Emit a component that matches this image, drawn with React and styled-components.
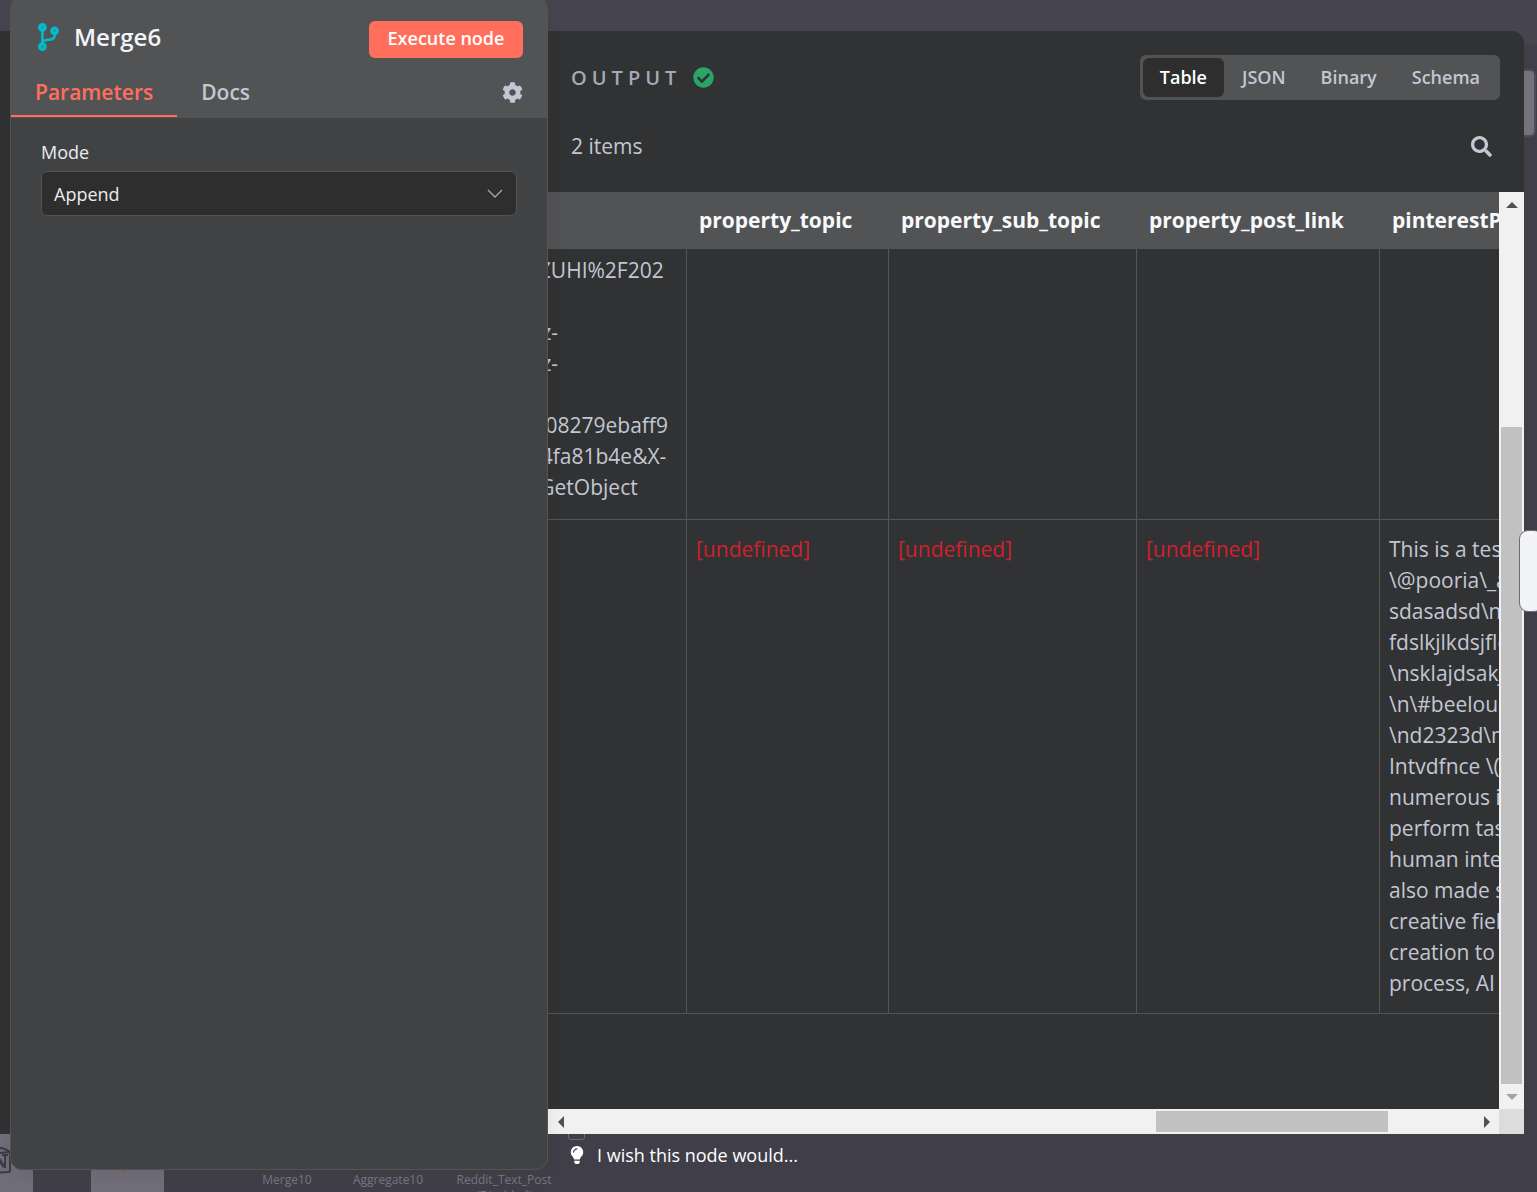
import React from "react";
import styled, { createGlobalStyle, css } from "styled-components";
import { FaCog, FaSearch, FaCheckCircle, FaLightbulb, FaCodeBranch } from "react-icons/fa";

const GlobalStyle = createGlobalStyle`
  *, *::before, *::after { box-sizing: border-box; }
  body {
    margin: 0;
    font-family: "Open Sans", "Noto Sans", sans-serif;
    color: #c3c7d3;
    background: #3f3e48;
  }
  button, select { font-family: inherit; }
`;

const Screen = styled.div`
  position: relative;
  display: grid;
  grid-template-columns: 10px 538px minmax(0, 1fr) 13px;
  grid-template-rows: 31px minmax(0, 1fr) 36px 22px;
  height: 100vh;
  overflow: hidden;
  background: linear-gradient(#46454f 0, #46454f 44px, #403f49 45px, #403f49 100%);
`;

/* Workflow canvas behind the dialog */
const Canvas = styled.div`
  position: absolute;
  inset: 0;
  overflow: hidden;
`;

const CanvasNode = styled.div`
  position: absolute;
  left: ${(p) => p.$x}px;
  bottom: -20px;
  width: ${(p) => p.$w}px;
  height: 84px;
  background: #706e7a;
`;

const CanvasDot = styled.div`
  position: absolute;
  left: 122px;
  bottom: 20px;
  width: 5px;
  height: 5px;
  border-radius: 50%;
  background: #7d6155;
`;

const NodeLabel = styled.div`
  position: absolute;
  left: ${(p) => p.$x}px;
  bottom: ${(p) => (p.$lines === 2 ? -12 : 4)}px;
  width: 120px;
  font-size: 12px;
  font-weight: 500;
  line-height: 16px;
  text-align: center;
  color: #787782;
`;

const CanvasHandle = styled.div`
  position: absolute;
  left: 568px;
  bottom: 52px;
  width: 17px;
  height: 17px;
  border: 1px solid #6a6974;
  border-radius: 3px;
`;

const CanvasButton = styled.div`
  position: absolute;
  top: 69px;
  right: 1px;
  width: 36px;
  height: 68px;
  border: 2px solid #4d4c58;
  border-radius: 6px;
  background: #74727d;
`;

const NotionMark = styled.svg`
  position: absolute;
  left: -16px;
  bottom: 18px;
  width: 28px;
  height: 28px;
`;

/* Node parameters */
const ParamsPanel = styled.section`
  grid-column: 2;
  grid-row: 1 / 4;
  z-index: 2;
  display: flex;
  flex-direction: column;
  margin-top: -4px;
  overflow: hidden;
  border: 1px solid #535456;
  border-radius: 12px;
  background: #414243;
  box-shadow: 0 6px 16px rgba(68, 28, 23, 0.08);
`;

const ParamsHeader = styled.header`
  display: flex;
  flex-direction: column;
  gap: 9px;
  padding: 24px 24px 1px 0;
  background: #525355;
`;

const TitleRow = styled.div`
  display: flex;
  align-items: flex-start;
  height: 37px;
  padding-left: 27px;
`;

const BranchIcon = styled(FaCodeBranch)`
  width: 21px;
  height: 32px;
  color: #00bbcc;
`;

const Title = styled.h1`
  flex: 1;
  margin: 0 0 0 15px;
  font-size: 24px;
  font-weight: 600;
  line-height: 32px;
  color: #f2f4f8;
`;

const ExecuteButton = styled.button`
  height: 37px;
  width: 154px;
  padding: 0 0 4px;
  border: 0;
  border-radius: 6px;
  background: #ff6f5c;
  color: #fff;
  font-size: 18px;
  font-weight: 600;
`;

const TabRow = styled.nav`
  display: flex;
  align-items: center;
  height: 50px;
`;

const tab = css`
  height: 50px;
  padding: 2px 24px 0;
  border: 0;
  border-bottom: 2px solid transparent;
  background: none;
  font-size: 21px;
  font-weight: 600;
  line-height: 46px;
  color: #c3c7d3;
  text-decoration: none;
`;

const ParamsTab = styled.button`
  ${tab}
  border-bottom-color: #ff6f5c;
  color: #ff6f5c;
`;

const DocsLink = styled.a`
  ${tab}
`;

const IconButton = styled.button`
  display: flex;
  margin-left: auto;
  padding: 0;
  border: 0;
  background: none;
  font-size: 21px;
  color: #c3c7d3;
`;

const ParamsBody = styled.div`
  display: flex;
  flex-direction: column;
  gap: 6px;
  padding: 21px 30px;
`;

const FieldLabel = styled.label`
  font-size: 18px;
  font-weight: 500;
  line-height: 26px;
  color: #eaecf0;
`;

const SelectBox = styled.div`
  display: grid;
  align-items: center;
  & > * { grid-area: 1 / 1; }
`;

const Select = styled.select`
  appearance: none;
  width: 100%;
  height: 45px;
  padding: 0 12px;
  border: 1px solid #535456;
  border-radius: 6px;
  background: #2d2e2d;
  color: #eaecf0;
  font-size: 18px;
`;

const Chevron = styled.svg`
  justify-self: end;
  width: 16px;
  height: 10px;
  margin-right: 14px;
  pointer-events: none;
`;

/* Output */
const OutputPanel = styled.section`
  grid-column: 1 / 4;
  grid-row: 2;
  z-index: 1;
  display: flex;
  flex-direction: column;
  padding-left: 548px;
  border-radius: 0 12px 0 0;
  background: #313233;
`;

const OutputHeader = styled.header`
  display: flex;
  align-items: center;
  justify-content: space-between;
  padding: 24px 24px 0 23px;
`;

const OutputTitle = styled.h2`
  display: flex;
  align-items: center;
  gap: 12px;
  margin: 0;
  font-size: 20px;
  font-weight: 600;
  letter-spacing: 5px;
  line-height: 30px;
  color: #a5a9b5;
`;

const SuccessIcon = styled(FaCheckCircle)`
  width: 21px;
  height: 21px;
  color: #29a568;
`;

const ViewSwitch = styled.div`
  display: flex;
  gap: 1px;
  padding: 3px;
  border-radius: 6px;
  background: #525355;
`;

const ViewButton = styled.button`
  height: 39px;
  padding: 0 17px 2px;
  border: 0;
  border-radius: 6px;
  background: ${(p) => (p.$active ? "#2d2e2d" : "transparent")};
  color: ${(p) => (p.$active ? "#ffffff" : "#c3c7d3")};
  font-size: 18px;
  font-weight: 600;
`;

const ItemsRow = styled.div`
  display: flex;
  align-items: center;
  height: 92px;
  padding: 0 32px 0 23px;
  font-size: 21px;
`;

const DataArea = styled.div`
  flex: 1;
  min-height: 0;
  display: grid;
  grid-template-columns: minmax(0, 1fr) 25px;
  grid-template-rows: minmax(0, 1fr) 25px;
`;

const TableViewport = styled.div`
  overflow: hidden;
`;

/* The table is scrolled sideways, so its first column starts out of view */
const DataTable = styled.table`
  table-layout: fixed;
  width: 1107px;
  min-width: calc(100% + 35px);
  margin-left: -35px;
  border-collapse: separate;
  border-spacing: 0;
  font-size: 21px;
  line-height: 31px;
`;

const HeadCell = styled.th`
  height: 57px;
  padding: 0 12px;
  background: #525355;
  color: #f8f9fb;
  font-weight: 700;
  text-align: left;
  white-space: nowrap;
`;

const Cell = styled.td`
  height: ${(p) => (p.$cut ? 271 : 494)}px;
  padding: ${(p) => (p.$cut ? 6 : 14)}px 9px 14px;
  border-right: 1px solid #535456;
  border-bottom: 1px solid #535456;
  vertical-align: top;
  white-space: pre;
`;

const Undefined = styled.span`
  color: #d0202e;
`;

const Scrollbar = styled.div`
  display: flex;
  flex-direction: ${(p) => (p.$vertical ? "column" : "row")};
  background: #f1f1f1;
`;

const ScrollArrow = styled.button`
  display: grid;
  place-items: center;
  flex: none;
  width: 25px;
  height: 25px;
  padding: 0;
  border: 0;
  background: none;
  color: ${(p) => (p.$dim ? "#a3a3a3" : "#505050")};
  svg { transform: rotate(${(p) => p.$turn}deg); }
`;

const Gap = styled.div`
  flex: ${(p) => p.$share} 0 0;
`;

const Thumb = styled.div`
  flex: ${(p) => p.$share} 0 0;
  margin: ${(p) => (p.$vertical ? "0 2px" : "2px 0")};
  background: #c1c1c1;
`;

const Corner = styled.div`
  background: #dcdcdc;
`;

const WishLink = styled.a`
  grid-column: 3;
  grid-row: 3;
  z-index: 1;
  display: flex;
  align-items: center;
  gap: 11px;
  padding: 6px 0 0 20px;
  color: #fff;
  font-size: 18px;
  line-height: 30px;
  text-decoration: none;
  svg { width: 18px; height: 18px; }
`;

const SideHandle = styled.button`
  position: absolute;
  z-index: 3;
  top: 530px;
  right: -6px;
  width: 24px;
  height: 82px;
  padding: 0;
  border: 1px solid #6d6e74;
  border-radius: 9px;
  background: #f2f4f8;
`;

const Arrow = ({ turn, dim, label }) => (
  <ScrollArrow $turn={turn} $dim={dim} aria-label={label}>
    <svg width="12" height="12" viewBox="0 0 12 12">
      <path d="M0 9 L6 3 L12 9 Z" fill="currentColor" />
    </svg>
  </ScrollArrow>
);

const columns = ["", "property_topic", "property_sub_topic", "property_post_link", "pinterestPost"];

const url = ["LIZUHI%2F202", "", "mz-", "mz-", "", "ea08279ebaff9", "fa4fa81b4e&X-", "i=GetObject"].join("\n");

const post = [
  "This is a test",
  "\\@pooria\\_a",
  "sdasadsd\\n",
  "fdslkjlkdsjfle",
  "\\nsklajdsakj",
  "\\n\\#beeloud",
  "\\nd2323d\\n",
  "Intvdfnce \\(A",
  "numerous in",
  "perform task",
  "human intel",
  "also made s",
  "creative field",
  "creation to",
  "process, AI",
].join("\n");

export default function App() {
  return (
    <Screen>
      <GlobalStyle />
      <Canvas>
        <CanvasButton />
        <CanvasNode $x={-40} $w={73} />
        <CanvasNode $x={91} $w={73} />
        <CanvasDot />
        <NotionMark viewBox="0 0 28 28" fill="none" stroke="#3b3a45" strokeWidth="2">
          <path d="M2 4 L17 2 Q20 2 26 6 V25 Q26 26 25 26 L8 27 L2 20 Z" />
          <path d="M2 4 L8 8 L26 6" />
          <path d="M13 10 L20 21" strokeWidth="3" />
          <path d="M13 22 V10 M21 22 V9 M10 10 H14 M18 9 H24" />
        </NotionMark>
        <NodeLabel $x={227}>Merge10</NodeLabel>
        <NodeLabel $x={328}>Aggregate10</NodeLabel>
        <NodeLabel $x={444} $lines={2}>
          Reddit_Text_Post
          <br />
          (Disabled)
        </NodeLabel>
        <CanvasHandle />
      </Canvas>

      <OutputPanel>
        <OutputHeader>
          <OutputTitle>
            OUTPUT <SuccessIcon />
          </OutputTitle>
          <ViewSwitch>
            {["Table", "JSON", "Binary", "Schema"].map((view) => (
              <ViewButton key={view} $active={view === "Table"}>
                {view}
              </ViewButton>
            ))}
          </ViewSwitch>
        </OutputHeader>
        <ItemsRow>
          2 items
          <IconButton aria-label="Search">
            <FaSearch />
          </IconButton>
        </ItemsRow>
        <DataArea>
          <TableViewport>
            <DataTable>
              <colgroup>
                <col width="174" />
                <col width="202" />
                <col width="248" />
                <col width="243" />
                <col />
              </colgroup>
              <thead>
                <tr>
                  {columns.map((name) => (
                    <HeadCell key={name} scope="col">
                      {name}
                    </HeadCell>
                  ))}
                </tr>
              </thead>
              <tbody>
                <tr>
                  <Cell $cut>{url}</Cell>
                  <Cell $cut />
                  <Cell $cut />
                  <Cell $cut />
                  <Cell $cut />
                </tr>
                <tr>
                  <Cell />
                  {[1, 2, 3].map((n) => (
                    <Cell key={n}>
                      <Undefined>[undefined]</Undefined>
                    </Cell>
                  ))}
                  <Cell>{post}</Cell>
                </tr>
              </tbody>
            </DataTable>
          </TableViewport>
          <Scrollbar $vertical>
            <Arrow turn={0} label="Scroll up" />
            <Gap $share={210} />
            <Thumb $vertical $share={657} />
            <Arrow turn={180} dim label="Scroll down" />
          </Scrollbar>
          <Scrollbar>
            <Arrow turn={-90} label="Scroll left" />
            <Gap $share={583} />
            <Thumb $share={232} />
            <Gap $share={86} />
            <Arrow turn={90} label="Scroll right" />
          </Scrollbar>
          <Corner />
        </DataArea>
      </OutputPanel>

      <ParamsPanel>
        <ParamsHeader>
          <TitleRow>
            <BranchIcon />
            <Title>Merge6</Title>
            <ExecuteButton>Execute node</ExecuteButton>
          </TitleRow>
          <TabRow>
            <ParamsTab>Parameters</ParamsTab>
            <DocsLink href="#docs">Docs</DocsLink>
            <IconButton aria-label="Settings">
              <FaCog />
            </IconButton>
          </TabRow>
        </ParamsHeader>
        <ParamsBody>
          <FieldLabel htmlFor="mode">Mode</FieldLabel>
          <SelectBox>
            <Select id="mode" defaultValue="Append">
              <option>Append</option>
            </Select>
            <Chevron viewBox="0 0 16 10" fill="none" stroke="#a5a9b5" strokeWidth="1.3">
              <path d="M1 1 L8 8 L15 1" />
            </Chevron>
          </SelectBox>
        </ParamsBody>
      </ParamsPanel>

      <WishLink href="#wish">
        <FaLightbulb />
        I wish this node would...
      </WishLink>
      <SideHandle aria-label="Open side panel" />
    </Screen>
  );
}
